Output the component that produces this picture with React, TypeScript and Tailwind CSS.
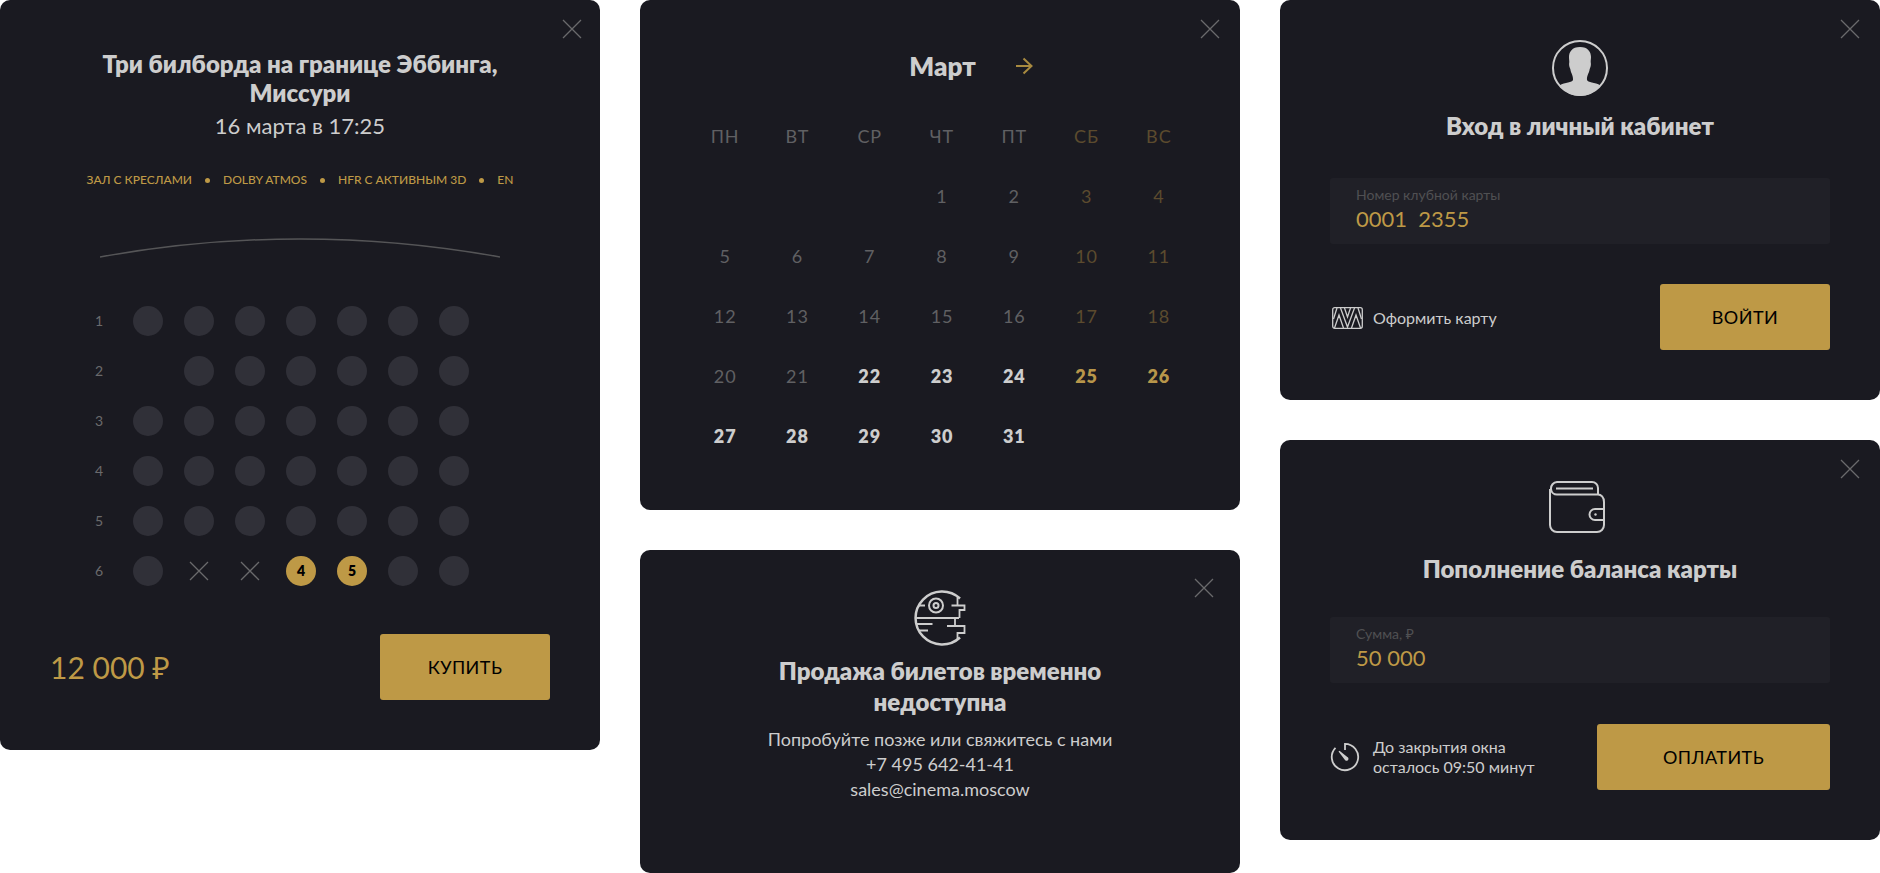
import type { ReactNode } from 'react';
import clsx from 'clsx';

const tags = ['ЗАЛ С КРЕСЛАМИ', 'DOLBY ATMOS', 'HFR С АКТИВНЫМ 3D', 'EN'];

type Seat = 'free' | 'none' | 'taken' | 'selected';

const fullRow: Seat[] = ['free', 'free', 'free', 'free', 'free', 'free', 'free'];
const seatRows: Seat[][] = [
  fullRow,
  ['none', 'free', 'free', 'free', 'free', 'free', 'free'],
  fullRow,
  fullRow,
  fullRow,
  ['free', 'taken', 'taken', 'selected', 'selected', 'free', 'free'],
];

const weekdays = ['ПН', 'ВТ', 'СР', 'ЧТ', 'ПТ', 'СБ', 'ВС'];
const weeks: (number | null)[][] = [
  [null, null, null, 1, 2, 3, 4],
  [5, 6, 7, 8, 9, 10, 11],
  [12, 13, 14, 15, 16, 17, 18],
  [20, 21, 22, 23, 24, 25, 26],
  [27, 28, 29, 30, 31, null, null],
];
const firstOpenDay = 22;

function Cross() {
  return (
    <svg viewBox="0 0 20 20" className="size-5" fill="none" stroke="#6a6a6c" strokeWidth="1.3">
      <path d="M1 1l18 18M19 1L1 19" />
    </svg>
  );
}

interface CardProps {
  children: ReactNode;
  className?: string;
  closeClassName?: string;
}

function Card({ children, className, closeClassName = 'top-[19px] right-5' }: CardProps) {
  return (
    <section className={clsx('relative rounded-[10px] bg-[#1a1a21]', className)}>
      <button type="button" aria-label="Закрыть" className={clsx('absolute', closeClassName)}>
        <Cross />
      </button>
      {children}
    </section>
  );
}

function GoldButton({ children, className }: { children: ReactNode; className?: string }) {
  return (
    <button
      type="button"
      className={clsx('h-[66px] rounded-[3px] bg-[#be9946] text-lg tracking-wide text-black', className)}
    >
      {children}
    </button>
  );
}

interface FieldProps {
  id: string;
  label: string;
  value: string;
}

function Field({ id, label, value }: FieldProps) {
  return (
    <div className="flex h-[66px] flex-col rounded-[3px] bg-[#202027] px-[26px] pt-[7px]">
      <label htmlFor={id} className="text-sm leading-5 text-[#505053]">
        {label}
      </label>
      <input
        id={id}
        defaultValue={value}
        className="w-full bg-transparent text-[22px] leading-7 text-[#be9946] outline-none"
      />
    </div>
  );
}

function SeatPicker() {
  return (
    <Card className="px-[50px] pt-[49px] pb-[50px]" closeClassName="top-[19px] right-[18px]">
      <h2 className="mx-auto max-w-[420px] text-center text-2xl leading-[29px] font-extrabold">
        Три билборда на границе Эббинга, Миссури
      </h2>
      <p className="mt-1 text-center text-[22px] leading-[29px]">16 марта в 17:25</p>

      <ul className="mt-8 flex items-center justify-center gap-[13px] text-xs leading-4 font-medium text-[#be9946]">
        {tags.map((tag, i) => (
          <li key={tag} className="flex items-center gap-[13px]">
            {i > 0 && <span className="size-[5px] rounded-full bg-[#be9946]" />}
            {tag}
          </li>
        ))}
      </ul>

      {/* screen */}
      <svg viewBox="0 0 400 20" className="mx-auto mt-[50px] h-5 w-[400px]" fill="none">
        <path d="M0 19Q200 -17 400 19" stroke="#555557" strokeWidth="1.5" />
      </svg>

      <div className="mt-12 flex flex-col gap-5 pl-[43px]">
        {seatRows.map((row, r) => (
          <div key={r} className="flex items-center gap-[21px]">
            <span className="mr-[7px] w-3 text-center text-sm text-[#6a6a6c]">{r + 1}</span>
            {row.map((seat, s) =>
              seat === 'none' ? (
                <span key={s} className="size-[30px]" />
              ) : (
                <button
                  key={s}
                  type="button"
                  disabled={seat === 'taken'}
                  aria-label={`Ряд ${r + 1}, место ${s + 1}`}
                  className={clsx(
                    'flex size-[30px] items-center justify-center rounded-full text-sm font-extrabold text-black',
                    seat === 'free' && 'bg-[#303038]',
                    seat === 'selected' && 'bg-[#be9946]',
                  )}
                >
                  {seat === 'taken' && <Cross />}
                  {seat === 'selected' && s + 1}
                </button>
              ),
            )}
          </div>
        ))}
      </div>

      <div className="mt-12 flex items-center justify-between">
        <span className="text-[30px] leading-10 text-[#be9946]">12 000 ₽</span>
        <GoldButton className="w-[170px]">КУПИТЬ</GoldButton>
      </div>
    </Card>
  );
}

function Calendar() {
  return (
    <Card className="pt-12 pr-[45px] pb-11 pl-[49px]">
      <div className="flex items-center justify-center">
        <h2 className="text-center text-[26px] leading-9 font-extrabold">Март</h2>
        <button type="button" aria-label="Следующий месяц" className="-mr-[58px] ml-10">
          <svg viewBox="0 0 17 18" className="h-[18px] w-[17px]" fill="none" stroke="#a88a40" strokeWidth="2">
            <path d="M0 9h15M7.500 1.500L15.500 9l-8 7.500" />
          </svg>
        </button>
      </div>

      <table className="mt-[22px] w-full table-fixed text-center text-lg tracking-wider text-[#606063]">
        <thead>
          <tr className="h-[60px]">
            {weekdays.map((day, i) => (
              <th key={day} className={clsx('font-normal', i > 4 && 'text-[#5c4b2e]')}>
                {day}
              </th>
            ))}
          </tr>
        </thead>
        <tbody>
          {weeks.map((week, w) => (
            <tr key={w} className="h-[60px]">
              {week.map((day, i) => {
                const open = day !== null && day >= firstOpenDay;
                const weekend = i > 4;
                return (
                  <td
                    key={i}
                    className={clsx(
                      open && 'font-extrabold',
                      open && (weekend ? 'text-[#b8964a]' : 'text-[#cdcdcd]'),
                      !open && weekend && 'text-[#5c4b2e]',
                    )}
                  >
                    {day}
                  </td>
                );
              })}
            </tr>
          ))}
        </tbody>
      </table>
    </Card>
  );
}

function SalesClosed() {
  return (
    <Card className="px-[50px] pt-10 pb-[71px] text-center" closeClassName="top-7 right-[26px]">
      <svg viewBox="0 0 52 56" className="mx-auto h-14 w-[52px]" fill="none" stroke="#cdcdcd" strokeWidth="2">
        <path d="M46 8.500A26.500 26.500 0 1 0 46 47.500" strokeWidth="2.500" />
        <circle cx="22" cy="15.500" r="7" />
        <circle cx="22" cy="15.500" r="2.500" />
        <path d="M5 15.500h6M2 28h43M2 34h16.500M5 40.500h9" />
        <path d="M43.500 7v8.500M37.500 15.500h13v4.500h-5v8M41 28v8M33 36h17.500v7h-7v6" strokeWidth="1.800" />
      </svg>
      <h2 className="mx-auto mt-[9px] max-w-[340px] text-2xl leading-[31px] font-extrabold">
        Продажа билетов временно недоступна
      </h2>
      <div className="mt-[10px] flex flex-col items-center text-lg leading-[25px]">
        <p>Попробуйте позже или свяжитесь с нами</p>
        <a href="tel:+74956424141">+7 495 642-41-41</a>
        <a href="mailto:sales@cinema.moscow">sales@cinema.moscow</a>
      </div>
    </Card>
  );
}

function Login() {
  return (
    <Card className="px-[50px] pt-10 pb-[50px]">
      <svg viewBox="0 0 56 56" className="mx-auto size-14">
        <circle cx="28" cy="28" r="27" fill="none" stroke="#cdcdcd" strokeWidth="2" />
        <path
          d="M28 7C20 7 17 12 17 17c0 2 .3 3 .3 5-.6 3 .2 5 1 7 .8 5 3 6 2.700 11-.6 2.500-8 2-13.500 5.500C13 52 20 56 28 56s15-4 20.500-10.500C43 42 35.600 42.500 35 40c-.3-5 1.900-6 2.700-11 .8-2 1.600-4 1-7 0-2 .3-3 .3-5 0-5-3-10-11-10z"
          fill="#cdcdcd"
        />
      </svg>
      <h2 className="mt-[15px] text-center text-2xl leading-[29px] font-extrabold">Вход в личный кабинет</h2>
      <div className="mt-[38px]">
        <Field id="card-number" label="Номер клубной карты" value={'0001\u00a0 2355'} />
      </div>
      <div className="mt-10 flex items-center justify-between">
        <a href="#card" className="flex items-center gap-[10px] pt-0.5 pl-0.5 text-base leading-5">
          <svg viewBox="0 0 31 22" className="h-[22px] w-[31px]" fill="none" stroke="#cdcdcd" strokeWidth="1.300">
            <rect x=".7" y=".7" width="29.600" height="20.600" rx="2" />
            <path d="M1.500 12L5 1M2.500 21L7 8l4.500 13M8.500 1l7 19 7-19M12.500 1l3 9 3-9M19.500 21L24 8l4.500 13M29.500 12L26 1" />
          </svg>
          Оформить карту
        </a>
        <GoldButton className="w-[170px]">ВОЙТИ</GoldButton>
      </div>
    </Card>
  );
}

function TopUp() {
  return (
    <Card className="px-[50px] pt-10 pb-[50px]">
      <div className="flex justify-center pr-[6px]">
        <svg viewBox="0 0 56 54" className="h-[54px] w-14" fill="none" stroke="#cdcdcd" strokeWidth="2">
          <path d="M1 9v36a7 7 0 0 0 7 7h40a7 7 0 0 0 7-7V22c0-5-3-7.500-6-7.500H8A6 6 0 0 1 2 9a6.500 6.500 0 0 1 6-7h35a6 6 0 0 1 6 6v7" />
          <path d="M7 8.500h37M55 29H46a5.500 5.500 0 0 0 0 11h9" />
          <circle cx="46.500" cy="34.500" r="1.200" fill="#cdcdcd" stroke="none" />
        </svg>
      </div>
      <h2 className="mt-5 text-center text-2xl leading-[29px] font-extrabold">Пополнение баланса карты</h2>
      <div className="mt-[34px]">
        <Field id="amount" label="Сумма, ₽" value="50 000" />
      </div>
      <div className="mt-[41px] flex items-center justify-between">
        <p className="flex items-center gap-[13px] text-base leading-5">
          <svg viewBox="0 0 30 30" className="size-[30px]" fill="none" stroke="#cdcdcd" strokeWidth="1.800">
            <path d="M15 8V1.800A13.200 13.200 0 1 1 5.500 5.800" />
            <path d="M8.500 9.500l1-.8 7.800 6.300a2 2 0 1 1-2.700 2.500z" fill="#cdcdcd" stroke="none" />
          </svg>
          <span>
            До закрытия окна
            <br />
            осталось 09:50 минут
          </span>
        </p>
        <GoldButton className="w-[233px]">ОПЛАТИТЬ</GoldButton>
      </div>
    </Card>
  );
}

export default function App() {
  return (
    <main className="grid grid-cols-3 items-start gap-10 bg-white font-[Lato,'Noto_Sans',sans-serif] text-[#cdcdcd]">
      <SeatPicker />
      <div className="flex flex-col gap-10">
        <Calendar />
        <SalesClosed />
      </div>
      <div className="flex flex-col gap-10">
        <Login />
        <TopUp />
      </div>
    </main>
  );
}
